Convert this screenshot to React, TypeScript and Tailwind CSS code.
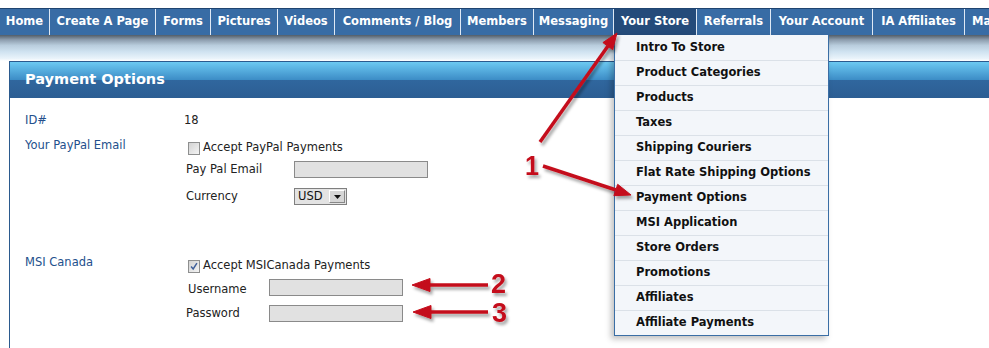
const navItems = [
  { label: 'Home', w: 'w-[50px]' },
  { label: 'Create A Page', w: 'w-[106px]' },
  { label: 'Forms', w: 'w-[55px]' },
  { label: 'Pictures', w: 'w-[67px]' },
  { label: 'Videos', w: 'w-[57px]' },
  { label: 'Comments / Blog', w: 'w-[126px]' },
  { label: 'Members', w: 'w-[73px]' },
  { label: 'Messaging', w: 'w-[80px]' },
  { label: 'Your Store', w: 'w-[83px]', active: true },
  { label: 'Referrals', w: 'w-[74px]' },
  { label: 'Your Account', w: 'w-[102px]' },
  { label: 'IA Affiliates', w: 'w-[92px]' },
];

const storeMenu = [
  'Intro To Store',
  'Product Categories',
  'Products',
  'Taxes',
  'Shipping Couriers',
  'Flat Rate Shipping Options',
  'Payment Options',
  'MSI Application',
  'Store Orders',
  'Promotions',
  'Affiliates',
  'Affiliate Payments',
];

const Checkbox = ({ checked }: { checked?: boolean }) => (
  <span className="relative ml-[4px] mr-[3px] inline-block h-[13px] w-[12px] border border-[#8e8f8f] bg-[linear-gradient(135deg,#d2d2d2,#f4f4f4)]">
    {checked && (
      <svg viewBox="0 0 12 13" className="absolute inset-0 h-full w-full">
        <path d="M2.5 6.5 L5 9.5 L9.5 2.5" fill="none" stroke="#3f5f9a" strokeWidth="1.8" />
      </svg>
    )}
  </span>
);

const TextBox = ({ w }: { w: string }) => (
  <div className={`h-[17px] ${w} border border-[#8a8a8a] bg-[#e1e1e1]`} />
);

const Annotations = () => (
  <svg className="pointer-events-none absolute inset-0" width="989" height="348">
    <defs>
      <filter id="sh" x="-20%" y="-20%" width="140%" height="140%">
        <feDropShadow dx="2" dy="3" stdDeviation="1.6" floodColor="#000" floodOpacity="0.35" />
      </filter>
    </defs>
    <g filter="url(#sh)" fill="#c4111b" stroke="#c4111b">
      <line x1="540" y1="142" x2="608" y2="46" strokeWidth="3.5" />
      <polygon points="617,33 612.7,49.6 602.9,42.6" strokeWidth="1" />
      <line x1="543" y1="166" x2="616" y2="190" strokeWidth="3.5" />
      <polygon points="631,195 613.9,195.7 617.7,184.3" strokeWidth="1" />
      <line x1="488" y1="285" x2="428" y2="285" strokeWidth="3.5" />
      <polygon points="412,285 430,278.5 430,291.5" strokeWidth="1" />
      <line x1="488" y1="312" x2="429" y2="312" strokeWidth="3.5" />
      <polygon points="413,312 431,305.5 431,318.5" strokeWidth="1" />
      <text x="525" y="175" fontFamily="Liberation Sans, Arial, sans-serif" fontWeight="bold" fontSize="28" stroke="none" textLength="14" lengthAdjust="spacingAndGlyphs">1</text>
      <text x="491" y="293" fontFamily="Liberation Sans, Arial, sans-serif" fontWeight="bold" fontSize="28" stroke="none" textLength="15" lengthAdjust="spacingAndGlyphs">2</text>
      <text x="492" y="322" fontFamily="Liberation Sans, Arial, sans-serif" fontWeight="bold" fontSize="28" stroke="none" textLength="15" lengthAdjust="spacingAndGlyphs">3</text>
    </g>
  </svg>
);

const App = () => {
  return (
    <div className="relative flex h-[348px] w-[989px] flex-col overflow-hidden bg-white font-['DejaVu_Sans',Verdana,sans-serif]">
      <div className="h-[8px] shrink-0" />
      <nav className="flex h-[27px] shrink-0 border-t border-[#1f4470] bg-[#386ca5] text-[11.5px] font-bold text-white">
        {navItems.map((item) => (
          <div
            key={item.label}
            className={`flex h-full shrink-0 items-center justify-center whitespace-nowrap border-r border-[#dfe9f5] ${item.w} ${
              item.active ? 'bg-[#244b7a]' : ''
            }`}
          >
            {item.label}
          </div>
        ))}
        <div className="flex h-full items-center whitespace-nowrap pl-[7px]">Ma</div>
      </nav>

      <div className="h-[26px] shrink-0 bg-[linear-gradient(to_bottom,#525d69_0%,#8c9cad_18%,#b9cddd_40%,#d0e3f1_65%,#e9f3fa_90%,#ffffff_100%)]" />

      <section className="ml-[9px] flex-1 border-l border-t border-[#2b5a8e]">
        <header className="flex h-[36px] items-center bg-[linear-gradient(to_bottom,#6cc9f2_0%,#3c8cc6_50%,#30679e_50%,#2c5e93_100%)] pl-[15px] text-[14.5px] font-bold text-white">
          Payment Options
        </header>

        <div className="pl-[15px] pt-[15px] text-[11.5px] text-[#222]">
          <div className="flex h-[16px] items-center">
            <div className="w-[159px] text-[#23508c]">ID#</div>
            <div>18</div>
          </div>

          <div className="mt-[8px] flex">
            <div className="h-[16px] w-[159px] leading-[16px] text-[#23508c]">Your PayPal Email</div>
            <div className="pt-[3px]">
              <div className="flex h-[16px] items-center">
                <Checkbox />
                <span>Accept PayPal Payments</span>
              </div>
              <div className="mt-[5px] flex h-[17px] items-center">
                <div className="w-[110px] pl-[2px]">Pay Pal Email</div>
                <TextBox w="w-[134px]" />
              </div>
              <div className="mt-[10px] flex h-[17px] items-center">
                <div className="w-[110px] pl-[2px]">Currency</div>
                <div className="flex h-[17px] w-[53px] items-center justify-between border border-[#7f7f7f] bg-[#e3e3e3] pl-[3px] pr-[1px]">
                  <span className="leading-none text-[#111]">USD</span>
                  <span className="flex h-[13px] w-[16px] items-center justify-center border border-b-[#888] border-l-[#fff] border-r-[#888] border-t-[#fff] bg-[#d6d6d6]">
                    <svg width="7" height="4" viewBox="0 0 7 4">
                      <polygon points="0,0 7,0 3.5,4" fill="#111" />
                    </svg>
                  </span>
                </div>
              </div>
            </div>
          </div>

          <div className="mt-[49px] flex">
            <div className="h-[16px] w-[159px] leading-[16px] text-[#23508c]">MSI Canada</div>
            <div className="pt-[4px]">
              <div className="flex h-[16px] items-center">
                <Checkbox checked />
                <span>Accept MSICanada Payments</span>
              </div>
              <div className="mt-[5px] flex h-[17px] items-center">
                <div className="w-[85px] translate-y-[2px] pl-[4px]">Username</div>
                <TextBox w="w-[134px]" />
              </div>
              <div className="mt-[9px] flex h-[17px] items-center">
                <div className="w-[85px] pl-[2px]">Password</div>
                <TextBox w="w-[134px]" />
              </div>
            </div>
          </div>
        </div>
      </section>

      <div className="absolute left-[614px] top-[35px] w-[215px] border-x border-b border-[#3a6ea5] bg-[#f3f6fa] shadow-[-3px_3px_6px_rgba(0,0,0,0.25)]">
        {storeMenu.map((entry, i) => (
          <div
            key={entry}
            className={`flex h-[25px] items-center pl-[21px] text-[11.5px] font-bold text-[#111] ${
              i > 0 ? 'border-t border-[#dbe1e8]' : ''
            }`}
          >
            {entry}
          </div>
        ))}
      </div>

      <Annotations />
    </div>
  );
};

export default App;
